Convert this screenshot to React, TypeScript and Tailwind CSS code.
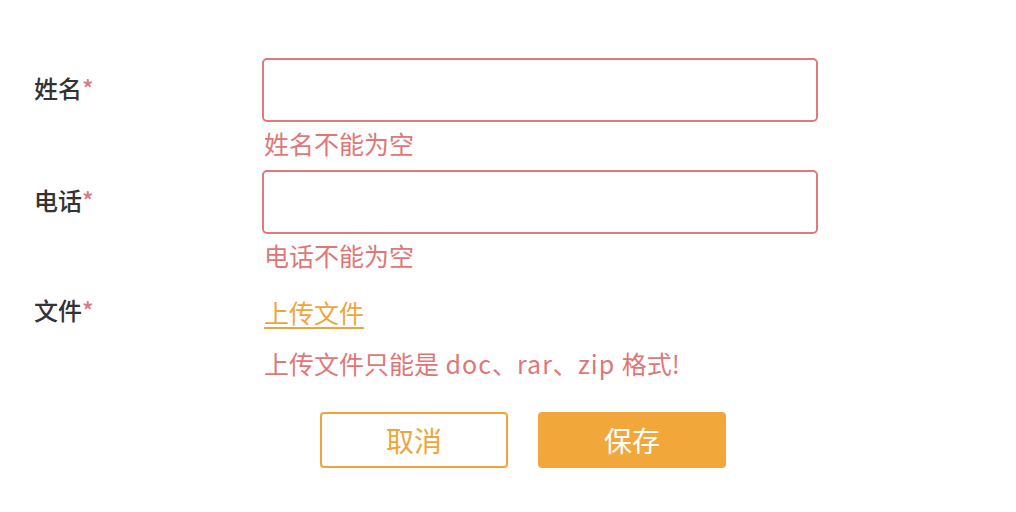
const font = { fontFamily: '"Noto Sans CJK SC", "Noto Sans", sans-serif' };

function Label({ text }: { text: string }) {
  return (
    <div className="flex items-center pb-[4px] text-[24px] font-medium text-[#333333]">
      <span>{text}</span>
      <span className="text-[#e07a7a]">*</span>
    </div>
  );
}

function Field({ label, error }: { label: string; error: string }) {
  return (
    <div className="grid grid-cols-[228px_556px]">
      <div className="flex h-16 items-center">
        <Label text={label} />
      </div>
      <div className="flex flex-col">
        <input
          type="text"
          className="h-16 w-full rounded-[5px] border-2 border-[#e07a7a] bg-white px-3 outline-none"
        />
        <div className="h-12 pl-[2px] text-[25px] leading-[42px] text-[#e07777]">{error}</div>
      </div>
    </div>
  );
}

export default function App() {
  return (
    <div className="min-h-[512px] w-[1016px] bg-white pl-[34px] pt-[58px]" style={font}>
      <Field label="姓名" error="姓名不能为空" />
      <Field label="电话" error="电话不能为空" />

      {/* 文件上传 */}
      <div className="grid grid-cols-[228px_556px]">
        <div className="flex h-[60px] items-center">
          <Label text="文件" />
        </div>
        <div className="flex flex-col">
          <div className="flex h-[60px] items-center pl-[2px]">
            <a className="cursor-pointer text-[25px] leading-[32px] text-[#f0a53c] underline decoration-2 underline-offset-[4px]">
              上传文件
            </a>
          </div>
          <div className="h-12 pl-[2px] text-[25px] leading-[42px] text-[#e07777]">
            上传文件只能是<span className="tracking-[1px]"> doc</span>、
            <span className="tracking-[1px]">rar</span>、
            <span className="tracking-[1px]">zip </span>格式!
          </div>
        </div>
      </div>

      <div className="ml-[286px] mt-[22px] flex gap-[30px]">
        <button
          type="button"
          className="h-14 w-[188px] rounded-[4px] border-2 border-[#f0a53c] bg-white text-[28px] text-[#f0a53c]"
        >
          取消
        </button>
        <button
          type="button"
          className="h-14 w-[188px] rounded-[4px] bg-[#f2a73b] text-[28px] text-white"
        >
          保存
        </button>
      </div>
    </div>
  );
}
